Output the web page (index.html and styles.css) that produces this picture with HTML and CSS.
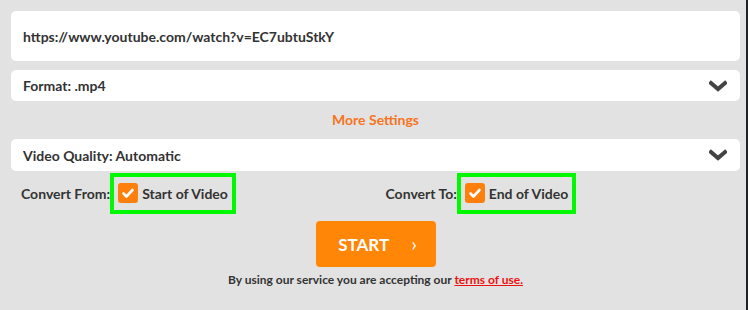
FILE: index.html
```html
<!DOCTYPE html>
<html>
<head>
<meta charset="utf-8">
<link rel="stylesheet" href="styles.css">
</head>
<body>
<div class="page">
  <div class="form">
    <div class="field url">https://www.youtube.com/watch?v=EC7ubtuStkY</div>
    <div class="field select">
      <span>Format: .mp4</span>
      <svg class="chev" viewBox="0 0 18 12" width="18" height="12"><path d="M2 3 L9 9 L16 3" fill="none" stroke="#444" stroke-width="4" stroke-linecap="square" stroke-linejoin="miter"/></svg>
    </div>
    <div class="more">More Settings</div>
    <div class="field select">
      <span>Video Quality: Automatic</span>
      <svg class="chev" viewBox="0 0 18 12" width="18" height="12"><path d="M2 3 L9 9 L16 3" fill="none" stroke="#444" stroke-width="4" stroke-linecap="square" stroke-linejoin="miter"/></svg>
    </div>
    <div class="convert">
      <div class="col">
        <span class="lbl">Convert From:</span>
        <label class="check">
          <span class="box"><svg viewBox="0 0 20 20" width="20" height="20"><path d="M5.5 10.5 L8.5 13.5 L14.5 7" fill="none" stroke="#fff" stroke-width="2.6" stroke-linecap="round" stroke-linejoin="round"/></svg></span>
          <span>Start of Video</span>
        </label>
      </div>
      <div class="col">
        <span class="lbl">Convert To:</span>
        <label class="check">
          <span class="box"><svg viewBox="0 0 20 20" width="20" height="20"><path d="M5.5 10.5 L8.5 13.5 L14.5 7" fill="none" stroke="#fff" stroke-width="2.6" stroke-linecap="round" stroke-linejoin="round"/></svg></span>
          <span>End of Video</span>
        </label>
      </div>
    </div>
    <div class="actions">
      <button class="start"><span>START</span><span class="arrow">&rsaquo;</span></button>
    </div>
    <p class="terms">By using our service you are accepting our <a href="#">terms of use.</a></p>
  </div>
</div>
</body>
</html>
```
FILE: styles.css
```css
html, body {
  margin: 0;
  padding: 0;
  height: 100%;
}
body {
  background: #e2e2e2;
  font-family: "Lato", "Noto Sans", sans-serif;
  color: #333;
}
.page {
  width: 746px;
  height: 310px;
  border-right: 2px solid #20202a;
  box-sizing: content-box;
}
.form {
  padding: 11px 6px 0 11px;
  display: flex;
  flex-direction: column;
}
.field {
  background: #fff;
  border-radius: 5px;
  font-weight: 700;
  font-size: 14px;
  padding: 0 12px;
  display: flex;
  align-items: center;
}
.url {
  height: 50px;
}
.select {
  height: 31px;
  margin-top: 9px;
  justify-content: space-between;
}
.chev {
  margin-right: 1px;
}
.more {
  text-align: center;
  color: #f5751e;
  font-weight: 700;
  font-size: 14px;
  height: 38px;
  line-height: 38px;
}
.more + .field {
  margin-top: 0;
  height: 32px;
}
.convert {
  display: flex;
  margin-top: 2px;
}
.col {
  flex: 1;
  display: flex;
  align-items: center;
  padding-left: 10px;
  font-weight: 700;
  font-size: 14px;
}
.check {
  display: flex;
  align-items: center;
  border: 4px solid #00f800;
  padding: 6px 4px 7px 4px;
  gap: 4px;
}
.box {
  width: 20px;
  height: 20px;
  border-radius: 3px;
  background: #ff7f0c;
  display: block;
}
.box svg {
  display: block;
}
.actions {
  display: flex;
  justify-content: center;
  margin-top: 7px;
}
.start {
  width: 120px;
  height: 46px;
  background: #ff8606;
  border: none;
  border-radius: 4px;
  color: #fff;
  font-family: inherit;
  font-weight: 700;
  font-size: 17px;
  display: flex;
  align-items: center;
  justify-content: center;
  gap: 22px;
  padding: 0 0 0 4px;
}
.arrow {
  font-size: 20px;
  font-weight: 400;
  line-height: 1;
  margin-top: -2px;
}
.terms {
  margin: 5px 0 0;
  text-align: center;
  font-size: 12px;
  font-weight: 700;
}
.terms a {
  color: #ee1111;
}
```
